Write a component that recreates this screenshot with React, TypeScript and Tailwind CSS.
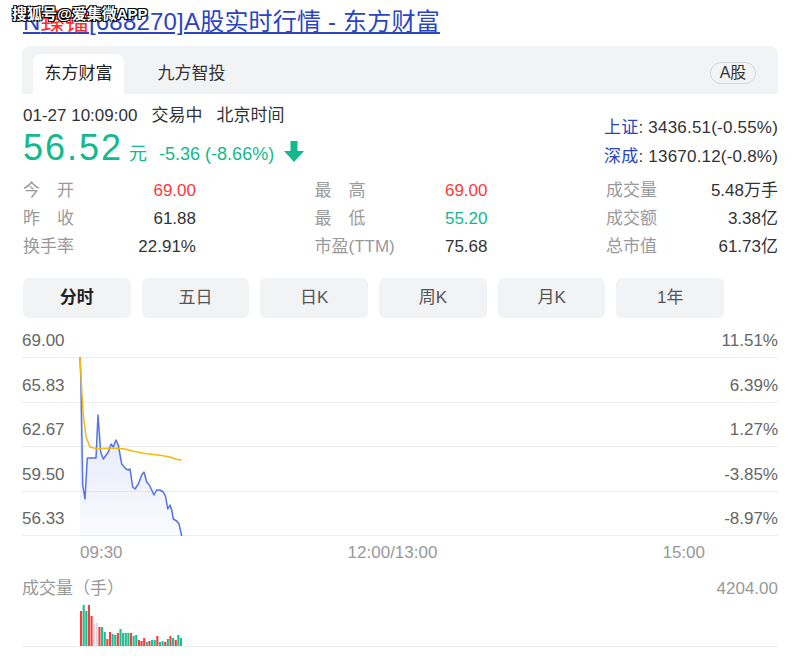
import React from "react";

const priceLine: [number, number][] = [
  [80, 355], [81, 380], [82.7, 483], [85, 497], [87.3, 456], [96, 456], [98, 413], [100.7, 450],
  [103.3, 457], [108.3, 450], [111, 442], [113.3, 445], [116, 438], [118.3, 443], [121.7, 462],
  [126, 467], [128.3, 468], [130, 467], [132.7, 485], [135, 487], [138.3, 482], [141.7, 473],
  [144, 470], [146.7, 480], [149.3, 483], [151.7, 488], [154, 493], [156.7, 488], [160, 488],
  [163.3, 490], [165.7, 495], [167.7, 507], [170, 503], [171.7, 508], [173.3, 517], [176.7, 519],
  [179, 522], [181.7, 534],
];

const avgLine: [number, number][] = [
  [80, 355], [81.7, 387], [83.3, 413], [86, 435], [90, 445], [96.7, 446.7], [110, 446],
  [123.3, 446.7], [133.3, 449.3], [146.7, 451.7], [160, 453.3], [170, 455], [176.7, 457.3], [181.7, 458.3],
];

// 成交量柱：顶部 y，颜色 r=涨 g=跌 n=平
const volumes: [number, string][] = [
  [609, "r"], [603, "g"], [609, "g"], [603, "r"], [614, "r"], [622, "n"], [621, "n"], [625, "r"],
  [625, "g"], [630, "g"], [637, "r"], [630, "r"], [632, "g"], [633, "g"], [631, "r"], [627, "g"],
  [631, "g"], [631, "g"], [631, "g"], [631, "r"], [634, "g"], [633, "g"], [638, "r"], [639, "r"],
  [636, "r"], [640, "g"], [639, "r"], [638, "g"], [638, "g"], [634, "r"], [640, "g"], [639, "g"],
  [640, "r"], [637, "g"], [634, "r"], [636, "g"], [638, "r"], [633, "g"], [636, "g"],
];

const volColor: Record<string, string> = { r: "#fb3a3a", g: "#19bf93", n: "#d9d9de" };

const stats = [
  [
    { label: "今\u3000开", value: "69.00", color: "text-[#fb3a3a]" },
    { label: "最\u3000高", value: "69.00", color: "text-[#fb3a3a]" },
    { label: "成交量", value: "5.48万手", color: "text-[#333]" },
  ],
  [
    { label: "昨\u3000收", value: "61.88", color: "text-[#333]" },
    { label: "最\u3000低", value: "55.20", color: "text-[#13b98d]" },
    { label: "成交额", value: "3.38亿", color: "text-[#333]" },
  ],
  [
    { label: "换手率", value: "22.91%", color: "text-[#333]" },
    { label: "市盈(TTM)", value: "75.68", color: "text-[#333]" },
    { label: "总市值", value: "61.73亿", color: "text-[#333]" },
  ],
];

const periods = ["分时", "五日", "日K", "周K", "月K", "1年"];

const axis = [
  { left: "69.00", right: "11.51%" },
  { left: "65.83", right: "6.39%" },
  { left: "62.67", right: "1.27%" },
  { left: "59.50", right: "-3.85%" },
  { left: "56.33", right: "-8.97%" },
];

const pts = (list: [number, number][]) => list.map(([x, y]) => `${x},${y}`).join(" ");

const App: React.FC = () => {
  return (
    <div className="w-[799px] h-[656px] overflow-hidden bg-white text-[17px] text-[#333] font-['Liberation_Sans','Noto_Sans_CJK_SC',sans-serif]">
      {/* 标题 */}
      <div className="relative h-[46px] px-[23px] pt-[6px]">
        <a className="text-[24px] leading-[32px] tracking-[0.2px] text-[#2a45c4] underline whitespace-nowrap">
          N<span className="text-[#ff2a2a]">臻镭</span>[688270]A股实时行情 - 东方财富
        </a>
        <div className="absolute left-[12px] top-[5px] text-[15px] leading-[18px] font-bold text-white [text-shadow:0_0_1px_#000,1px_1px_0_#000,-1px_-1px_0_#000,1px_-1px_0_#000,-1px_1px_0_#000]">
          搜狐号@爱集微APP
        </div>
      </div>

      <div className="px-[22px] pr-[21px]">
        {/* 标签栏 */}
        <div className="flex items-end justify-between h-[48px] bg-[#f2f3f5] rounded-t-[8px] pl-[11px] pr-[22px]">
          <div className="flex gap-[22px]">
            <div className="w-[91px] h-[40px] bg-white rounded-t-[8px] flex items-center justify-center text-[#222]">
              东方财富
            </div>
            <div className="w-[91px] h-[40px] flex items-center justify-center text-[#333]">九方智投</div>
          </div>
          <div className="mb-[10px] h-[22px] w-[46px] rounded-full border border-[#d6d6d6] flex items-center justify-center text-[16px] text-[#333]">
            A股
          </div>
        </div>

        {/* 行情头 */}
        <div className="flex justify-between pt-[10px]">
          <div className="pl-[1px]">
            <div className="leading-[24px] flex gap-[14px]">
              <span>01-27 10:09:00</span>
              <span>交易中</span>
              <span>北京时间</span>
            </div>
            <div className="flex items-baseline h-[40px] text-[#13b98d]">
              <span className="text-[36px] leading-[40px] tracking-[2px]">56.52</span>
              <span className="text-[18px] ml-[6px]">元</span>
              <span className="text-[18px] ml-[12px]">-5.36 (-8.66%)</span>
              <svg className="ml-[10px] self-center mt-[6px]" width="20" height="21" viewBox="0 0 20 21">
                <rect x="6.5" y="0" width="7" height="11" fill="#13b98d" />
                <polygon points="0,10 20,10 10,21" fill="#13b98d" />
              </svg>
            </div>
          </div>
          <div className="flex flex-col items-end pt-[9px] leading-[29px] tracking-[0.2px]">
            <div>
              <span className="text-[#2a45c4]">上证</span>: 3436.51(-0.55%)
            </div>
            <div>
              <span className="text-[#2a45c4]">深成</span>: 13670.12(-0.8%)
            </div>
          </div>
        </div>

        {/* 指标 */}
        <div className="mt-[6px] flex flex-col">
          {stats.map((row, i) => (
            <div key={i} className="grid grid-cols-[173px_173px_172px] justify-between h-[28px] items-center pl-[1px]">
              {row.map((c) => (
                <div key={c.label} className="flex justify-between">
                  <span className="text-[#9a9a9a]">{c.label}</span>
                  <span className={c.color}>{c.value}</span>
                </div>
              ))}
            </div>
          ))}
        </div>

        {/* 周期按钮 */}
        <div className="mt-[17px] flex gap-[11px] pl-[1px]">
          {periods.map((p, i) => (
            <div
              key={p}
              className={`w-[107.7px] h-[40px] rounded-[6px] bg-[#f2f3f5] flex items-center justify-center ${
                i === 0 ? "font-bold text-[#222]" : "text-[#555]"
              }`}
            >
              {p}
            </div>
          ))}
        </div>

        {/* 分时图 */}
        <div className="relative mt-[13px]">
          {axis.map((a, i) => (
            <div
              key={a.left}
              className={`flex justify-between items-end pb-[6px] border-b border-[#ececec] text-[#666] leading-[20px] ${
                i === 0 ? "h-[27px]" : "h-[44.5px]"
              }`}
            >
              <span>{a.left}</span>
              <span>{a.right}</span>
            </div>
          ))}
          <svg className="absolute left-0 top-0" width="756" height="205" viewBox="22 329 756 205">
            <defs>
              <linearGradient id="fillGrad" x1="0" y1="0" x2="0" y2="1">
                <stop offset="0%" stopColor="#6c86ee" stopOpacity="0.28" />
                <stop offset="100%" stopColor="#6c86ee" stopOpacity="0.03" />
              </linearGradient>
            </defs>
            <polygon points={`${pts(priceLine)} 80,534`} fill="url(#fillGrad)" />
            <polyline points={pts(priceLine)} fill="none" stroke="#5473e8" strokeWidth="1.5" strokeLinejoin="round" />
            <polyline points={pts(avgLine)} fill="none" stroke="#f9b80f" strokeWidth="1.5" strokeLinejoin="round" />
          </svg>
        </div>

        {/* 时间轴 */}
        <div className="h-[34px] pt-[7px] leading-[20px] flex justify-between pl-[58px] pr-[73px] text-[#999]">
          <span>09:30</span>
          <span>12:00/13:00</span>
          <span>15:00</span>
        </div>

        {/* 成交量 */}
        <div className="mt-[9px] h-[20px] leading-[20px] flex justify-between text-[#999]">
          <span>成交量（手）</span>
          <span>4204.00</span>
        </div>
        <div className="border-b border-[#ececec] h-[48px]">
          <svg width="756" height="47" viewBox="22 597 756 47" className="block">
            {volumes.map(([top, c], i) => (
              <rect key={i} x={80 + i * 2.63} y={top} width="2.1" height={644 - top} fill={volColor[c]} />
            ))}
          </svg>
        </div>
      </div>
    </div>
  );
};

export default App;
